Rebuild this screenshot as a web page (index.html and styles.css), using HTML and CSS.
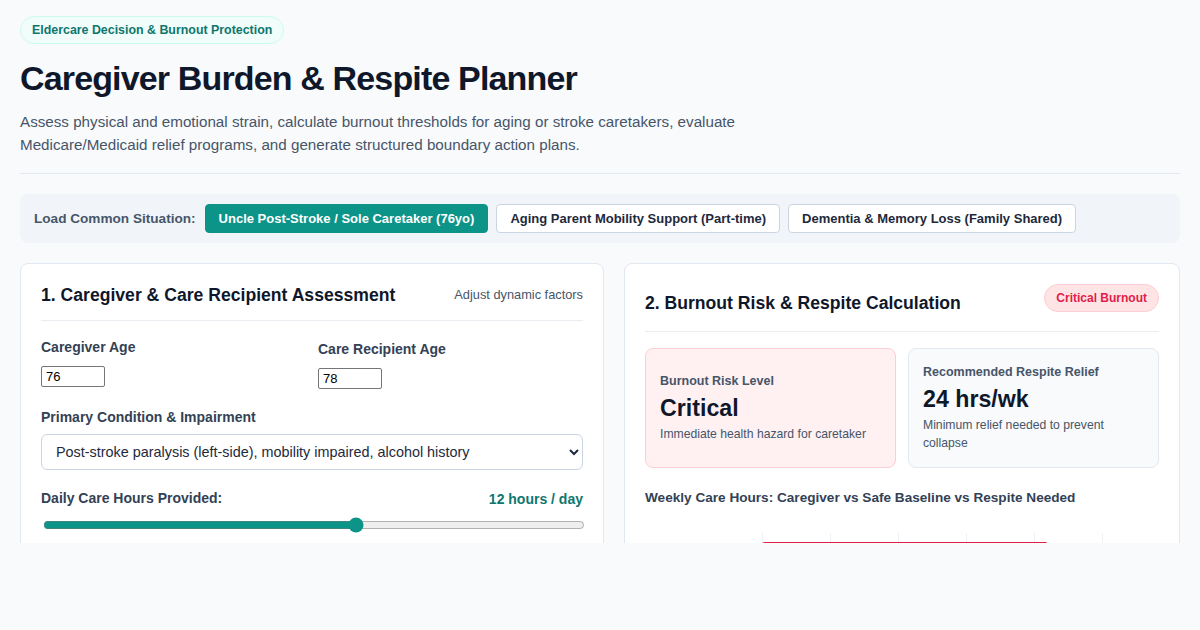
FILE: index.html
```html
<!DOCTYPE html>
<html lang="en">
<head>
<meta charset="utf-8">
<title>Caregiver Burden &amp; Respite Planner</title>
<link rel="stylesheet" href="styles.css">
</head>
<body>
<div class="page">
  <header class="intro">
    <span class="tag">Eldercare Decision &amp; Burnout Protection</span>
    <h1 class="title">Caregiver Burden &amp; Respite Planner</h1>
    <p class="lead">Assess physical and emotional strain, calculate burnout thresholds for aging or stroke caretakers, evaluate Medicare/Medicaid relief programs, and generate structured boundary action plans.</p>
  </header>

  <div class="situations">
    <span class="sit-label">Load Common Situation:</span>
    <button class="sit-btn active">Uncle Post-Stroke / Sole Caretaker (76yo)</button>
    <button class="sit-btn">Aging Parent Mobility Support (Part-time)</button>
    <button class="sit-btn">Dementia &amp; Memory Loss (Family Shared)</button>
  </div>

  <div class="grid">
    <section class="card">
      <div class="card-head">
        <h2 class="card-title">1. Caregiver &amp; Care Recipient Assessment</h2>
        <span class="card-hint">Adjust dynamic factors</span>
      </div>
      <div class="two-col">
        <div class="field">
          <label class="lbl">Caregiver Age</label>
          <input class="num" type="number" value="76">
        </div>
        <div class="field">
          <label class="lbl">Care Recipient Age</label>
          <input class="num" type="number" value="78">
        </div>
      </div>
      <div class="field">
        <label class="lbl">Primary Condition &amp; Impairment</label>
        <select class="sel">
          <option>Post-stroke paralysis (left-side), mobility impaired, alcohol history</option>
        </select>
      </div>
      <div class="field">
        <div class="range-head">
          <label class="lbl">Daily Care Hours Provided:</label>
          <span class="range-val">12 hours / day</span>
        </div>
        <input class="range" type="range" min="1" max="20" value="12">
      </div>
    </section>

    <section class="card">
      <div class="card-head tall">
        <h2 class="card-title pushed">2. Burnout Risk &amp; Respite Calculation</h2>
        <span class="risk-badge">Critical Burnout</span>
      </div>
      <div class="stats">
        <div class="stat danger">
          <div class="stat-label">Burnout Risk Level</div>
          <div class="stat-value">Critical</div>
          <div class="stat-desc">Immediate health hazard for caretaker</div>
        </div>
        <div class="stat">
          <div class="stat-label">Recommended Respite Relief</div>
          <div class="stat-value">24 hrs/wk</div>
          <div class="stat-desc">Minimum relief needed to prevent collapse</div>
        </div>
      </div>
      <h3 class="chart-title">Weekly Care Hours: Caregiver vs Safe Baseline vs Respite Needed</h3>
      <svg class="chart" width="514" height="160" viewBox="0 0 514 160">
        <g stroke="#eef1f4" stroke-width="1">
          <line x1="117.5" y1="0" x2="117.5" y2="160"/>
          <line x1="185.5" y1="0" x2="185.5" y2="160"/>
          <line x1="253.5" y1="0" x2="253.5" y2="160"/>
          <line x1="321.5" y1="0" x2="321.5" y2="160"/>
          <line x1="389.5" y1="0" x2="389.5" y2="160"/>
          <line x1="457.5" y1="0" x2="457.5" y2="160"/>
        </g>
        <rect x="117" y="9" width="286" height="34" rx="3" fill="#e11d48"/>
      </svg>
    </section>
  </div>
</div>
</body>
</html>
```
FILE: styles.css
```css
* { box-sizing: border-box; }
html, body { margin: 0; padding: 0; background: #f8fafc; }
body {
  font-family: "Liberation Sans", Arial, sans-serif;
  color: #0f172a;
}
.page {
  height: 543px;
  overflow: hidden;
  padding: 16px 20px 0;
}
.intro {
  border-bottom: 1px solid #e2e8f0;
  padding-bottom: 17px;
}
.tag {
  display: inline-flex;
  align-items: center;
  height: 28px;
  padding: 0 11px;
  border-radius: 14px;
  background: #f0fdfa;
  border: 1px solid #ccfbf1;
  color: #0f766e;
  font-size: 12.4px;
  font-weight: 700;
}
.title {
  margin: 14px 0 0;
  font-size: 34px;
  line-height: 41px;
  font-weight: 700;
  letter-spacing: -0.85px;
  color: #0f172a;
}
.lead {
  margin: 11px 0 0;
  max-width: 760px;
  font-size: 15.2px;
  line-height: 23px;
  color: #475569;
}
.situations {
  margin-top: 20px;
  background: #f1f5f9;
  border-radius: 8px;
  padding: 10px 14px;
  display: flex;
  align-items: center;
  gap: 8px;
}
.sit-label {
  font-size: 13.6px;
  font-weight: 700;
  color: #475569;
  margin-right: 1px;
}
.sit-btn {
  font-family: inherit;
  font-size: 13px;
  font-weight: 700;
  height: 29px;
  padding: 0 13px;
  border-radius: 4px;
  border: 1px solid #cbd5e1;
  background: #ffffff;
  color: #1e293b;
}
.sit-btn.active {
  background: #0d9488;
  border-color: #0d9488;
  color: #ffffff;
}
.grid {
  margin-top: 20px;
  display: grid;
  grid-template-columns: 584px 1fr;
  gap: 20px;
  align-items: start;
}
.card {
  background: #ffffff;
  border: 1px solid #e2e8f0;
  border-radius: 8px;
  padding: 20px 20px 24px;
  min-height: 400px;
}
.card-head {
  display: flex;
  justify-content: space-between;
  align-items: flex-start;
  border-bottom: 1px solid #e9edf2;
  padding-bottom: 14px;
}
.card-head.tall { padding-bottom: 17px; }
.card-title {
  margin: 0;
  font-size: 17.6px;
  line-height: 22px;
  font-weight: 700;
  color: #0f172a;
}
.card-title.pushed { margin-top: 8px; }
.card-hint {
  font-size: 12.8px;
  line-height: 22px;
  color: #475569;
}
.risk-badge {
  display: inline-flex;
  align-items: center;
  height: 28px;
  padding: 0 11px;
  border-radius: 14px;
  background: #ffe4e6;
  border: 1px solid #fecdd3;
  color: #e11d48;
  font-size: 12px;
  font-weight: 700;
}
.two-col {
  display: grid;
  grid-template-columns: 1fr 1fr;
  gap: 12px;
}
.field {
  margin-top: 18px;
  display: flex;
  flex-direction: column;
  align-items: flex-start;
}
.two-col + .field { margin-top: 20px; }
.lbl {
  font-size: 14px;
  line-height: 17px;
  font-weight: 700;
  color: #334155;
}
.num {
  margin-top: 10px;
  width: 64px;
  height: 21px;
  padding: 1px 4px;
  border: 1px solid #767676;
  border-radius: 2px;
  font-family: "Liberation Sans", Arial, sans-serif;
  font-size: 13px;
  color: #000;
}
.sel {
  margin-top: 8px;
  width: 100%;
  height: 36px;
  padding: 0 10px;
  border: 1px solid #cbd5e1;
  border-radius: 6px;
  background: #ffffff;
  font-family: "Liberation Sans", Arial, sans-serif;
  font-size: 14.4px;
  color: #1e293b;
}
.range-head {
  width: 100%;
  display: flex;
  justify-content: space-between;
  align-items: center;
}
.range-val {
  font-size: 14px;
  font-weight: 700;
  color: #0f766e;
}
.range {
  margin: 10px 0 0 2px;
  width: 100%;
  accent-color: #0d9488;
}
.field + .field { margin-top: 20px; }
.stats {
  margin-top: 16px;
  display: grid;
  grid-template-columns: 1fr 1fr;
  gap: 12px;
}
.stat {
  height: 120px;
  padding: 15px 14px;
  border-radius: 8px;
  border: 1px solid #e2e8f0;
  background: #f8fafc;
  display: flex;
  flex-direction: column;
  justify-content: center;
}
.stat.danger {
  background: #fff1f2;
  border-color: #fecdd3;
}
.stat-label {
  font-size: 12.5px;
  line-height: 16px;
  font-weight: 700;
  color: #475569;
}
.stat-value {
  margin-top: 5px;
  font-size: 23.2px;
  line-height: 28px;
  font-weight: 700;
  color: #0f172a;
}
.stat-desc {
  margin-top: 3px;
  font-size: 12.2px;
  line-height: 18px;
  color: #475569;
}
.chart-title {
  margin: 22px 0 0;
  font-size: 13.6px;
  line-height: 16px;
  font-weight: 700;
  color: #334155;
}
.chart {
  display: block;
  margin-top: 27px;
}
```
